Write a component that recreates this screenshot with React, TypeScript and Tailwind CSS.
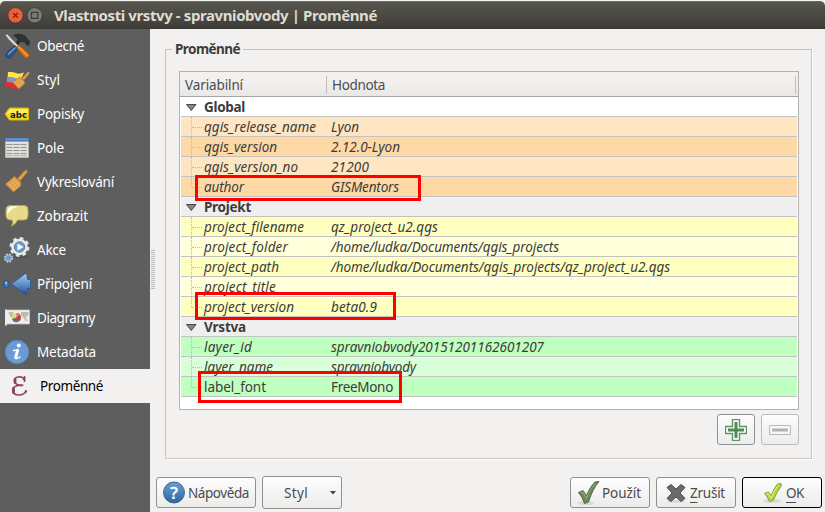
import { useLayoutEffect, useRef, useState } from "react";
import type { ReactNode } from "react";

/** Text whose tracking is tuned so that it occupies `w` pixels. */
function Fit({ w, children }: { w: number; children: ReactNode }) {
  const ref = useRef<HTMLSpanElement>(null);
  const [spacing, setSpacing] = useState(0);
  useLayoutEffect(() => {
    const el = ref.current;
    if (!el) return;
    const count = (el.textContent ?? "").length;
    setSpacing((w - el.getBoundingClientRect().width) / count);
  }, [w]);
  return (
    <span ref={ref} style={{ letterSpacing: `${spacing}px` }} className="inline-block whitespace-pre">
      {children}
    </span>
  );
}

const ToolsIcon = () => (
  <svg viewBox="0 0 26 26" className="size-[26px]">
    <path d="M9.500 2.500Q13 0 18 1.500q4 1.200 5 4.500l2.500 2-.3 3.500-2.200.8-2.500-3.500-3.500-.3-2.500 2.500-2-2 1.500-2.500Q12.500 3.500 9.500 2.500z" fill="#2b3335" stroke="#1a2021" strokeWidth=".5" />
    <path d="M13 9l2 2-3 3.500-2-2z" fill="#252b2d" />
    <path d="M1.500 2l2-.5L6 4.500l8.500 8.500-1.500 1.500L4.500 6z" fill="#e8e8e8" stroke="#8a8a8a" strokeWidth=".5" />
    <path d="M2 20.500l9-8 3 3-7.500 9.500Q4 25.500 2.500 24T2 20.500z" fill="#2a5690" stroke="#173765" strokeWidth=".7" />
    <path d="M4 21.500l7.500-7" stroke="#7ba6dc" strokeWidth="1.300" />
    <path d="M12.500 14.500l2.500-2.300L25 21.500l-.5 2-2.500 1.500z" fill="#f57900" stroke="#c95b00" strokeWidth=".7" />
    <path d="M15 14l8.500 8.500" stroke="#ffb053" strokeWidth="1" />
  </svg>
);

const Broom = () => (
  <>
    <path d="M13.500 9.500L20.500 2l2-1q1.500.5.500 2.500L16 12z" fill="#dda14c" stroke="#b1762b" strokeWidth=".7" />
    <path d="M10.500 7.500l6.500 6-.3 3.500-7.200 6L1.500 15z" fill="#dda04d" stroke="#b87f34" strokeWidth=".8" />
    <path d="M9 10.500l7 6.200M7 12.500l6.500 6.500M4.500 14.500l6.500 6.500" stroke="#edc07c" strokeWidth=".8" />
  </>
);

const StyleIcon = () => (
  <svg viewBox="0 0 26 26" className="size-[26px]">
    <path d="M4 5q5-.5 8 1t8-.5L17 12H3.500z" fill="#ffe54a" />
    <path d="M3.500 10q5-.5 8 1t6-1v6H2.500z" fill="#7799c8" />
    <path d="M2.500 15q5-.5 8 1.500t4.500 0v5Q9 22 7 20.500T1.500 19.500z" fill="#ee2929" />
    <g transform="translate(7.500 4) scale(.77)"><Broom /></g>
  </svg>
);

const LabelIcon = () => (
  <svg viewBox="0 0 26 26" className="size-[26px]">
    <path d="M1 13l4.500-6H24.500v12H5.500z" fill="#f1d91e" stroke="#d8b70d" />
    <path d="M6 8H24v4.500H2.800z" fill="#fff68a" opacity=".6" />
    <text x="6" y="16.700" fontFamily="DejaVu Sans, sans-serif" fontWeight="bold" fontSize="9" textLength="17" lengthAdjust="spacingAndGlyphs" fill="#20211c">abc</text>
  </svg>
);

const TableIcon = () => (
  <svg viewBox="0 0 26 26" className="size-[26px]">
    <path d="M1.500 4h23v18.500h-23z" fill="#dfe0dc" stroke="#c5c6c2" strokeWidth=".6" />
    <path d="M1 3h24v3.500H1z" fill="#4a78b4" />
    <path d="M2 4.200h22" stroke="#82a8d6" />
    <path d="M2.500 9.500h21M2.500 12.500h21M2.500 15.500h21M2.500 18.500h21" stroke="#93958f" strokeWidth="1" strokeDasharray="6 1" />
    <path d="M2.500 20.500h21" stroke="#a5a7a2" strokeWidth=".8" strokeDasharray="6 1" />
  </svg>
);

const BroomIcon = () => (
  <svg viewBox="0 0 26 26" className="size-[26px]"><Broom /></svg>
);

const BubbleIcon = () => (
  <svg viewBox="0 0 26 26" className="size-[26px]">
    <path d="M6 2.500h14q4 0 4 4v6.500q0 4-4 4h-6.500q-1.500 4-6 6 2-3 1-6H6q-4-.5-4-4V6.500q0-4 4-4z" fill="#e7da89" stroke="#b5a851" />
    <path d="M3.500 12Q2.500 4 7 3.700q5-.7 7.500 0Q6 5 3.500 12z" fill="#fffdf0" />
  </svg>
);

const GearIcon = () => (
  <svg viewBox="0 0 26 26" className="size-[26px] overflow-visible">
    <ellipse cx="18" cy="19.500" rx="8" ry="2" fill="#454545" opacity=".5" />
    <circle cx="15.500" cy="10" r="8.500" fill="none" stroke="#e5e5e3" strokeWidth="3" strokeDasharray="3.500 3.176" />
    <circle cx="15.500" cy="10" r="6.700" fill="#6a9bd2" stroke="#e9e9e7" strokeWidth="3.200" />
    <circle cx="15.500" cy="10" r="5.200" fill="none" stroke="#416ea6" strokeWidth=".9" />
    <path d="M13.500 6.500l6 3.500-6 3.500z" fill="#fff" />
    <circle cx="4.500" cy="21" r="3.800" fill="none" stroke="#c8d2dc" strokeWidth="1.500" strokeDasharray="1.900 1.080" />
    <circle cx="4.500" cy="21" r="3" fill="#6d9ccf" stroke="#afc5dc" strokeWidth=".7" />
  </svg>
);

const JoinIcon = () => (
  <svg viewBox="0 0 26 26" className="size-[26px] overflow-visible">
    <defs>
      <linearGradient id="join" x2="0" y2="1"><stop offset=".1" stopColor="#9cc2ef" /><stop offset=".55" stopColor="#5a89c4" /><stop offset="1" stopColor="#1d4a87" /></linearGradient>
    </defs>
    <ellipse cx="2.500" cy="13" rx="2.800" ry="3.700" fill="#4879b8" stroke="#254d82" />
    <ellipse cx="2" cy="11.700" rx="1" ry="1.200" fill="#a8caf0" />
    <path d="M7.500 13L22.500 1.800 23.500 8.500h3v9h-3l-1 7z" fill="url(#join)" stroke="#2c5792" strokeWidth=".8" />
  </svg>
);

const DiagramIcon = () => (
  <svg viewBox="0 0 26 26" className="size-[26px]">
    <path d="M2 5h23.500v14H2z" fill="#ededeb" stroke="#c9c9c7" strokeWidth=".7" />
    <path d="M2 4.500v16" stroke="#f1f1ef" strokeWidth="1.800" />
    <path d="M4.500 7h5l-1 4 1 4-3.500-4zM17 7h7.500l-.5 4-2.500 1 2 4h-2L19 12l-2-1z" fill="#b9bbb7" />
    <path d="M12.500 12.500V8a4.500 4.500 0 11-4.300 6z" fill="#da3535" />
    <path d="M12.500 12.500L8.200 14A4.500 4.500 0 0112.500 8z" fill="#f0df42" />
    <path d="M12.500 12.500V8a4.500 4.500 0 013.500 1.700z" fill="#e28060" />
    <path d="M12.500 12.500l1 4.500a4.500 4.500 0 01-5.300-3z" fill="#4277bb" />
  </svg>
);

const InfoIcon = () => (
  <svg viewBox="0 0 26 26" className="size-[26px]">
    <circle cx="13" cy="13" r="11.800" fill="#6a9bd2" stroke="#5085c0" />
    <circle cx="14.800" cy="6.500" r="2" fill="#fff" />
    <path d="M9.500 11.500q2.500-.3 4.500-.8" fill="none" stroke="#fff" strokeWidth="1.600" strokeLinecap="round" />
    <path d="M13.500 11.500l-1.800 7" stroke="#fff" strokeWidth="3" strokeLinecap="round" />
    <path d="M11.700 19q1 1.500 4-1" fill="none" stroke="#fff" strokeWidth="1.600" strokeLinecap="round" />
  </svg>
);

const EpsilonIcon = () => (
  <svg viewBox="0 0 26 26" className="size-[26px]">
    <g fill="none" stroke="#8c4260" strokeLinecap="round">
      <path d="M18.500 7Q17 3.800 13.500 3.800Q8.500 4 8.500 8Q8.700 11.500 14 12.200Q6.800 12.500 6.800 17.500Q7 22 13 22Q18.500 21.800 20 18" strokeWidth="1.600" />
      <path d="M9 6.500v3M7.500 15.500v4" strokeWidth="2.800" />
      <path d="M18.500 4v4M14 12.200h2.500M19.800 18v1" strokeWidth="1.900" />
    </g>
  </svg>
);

const menu = [
  { label: "Obecné", w: 47, icon: <ToolsIcon /> },
  { label: "Styl", w: 23, icon: <StyleIcon /> },
  { label: "Popisky", w: 47, icon: <LabelIcon /> },
  { label: "Pole", w: 27, icon: <TableIcon /> },
  { label: "Vykreslování", w: 77, icon: <BroomIcon /> },
  { label: "Zobrazit", w: 51, icon: <BubbleIcon /> },
  { label: "Akce", w: 29, icon: <GearIcon /> },
  { label: "Připojení", w: 55, icon: <JoinIcon /> },
  { label: "Diagramy", w: 58, icon: <DiagramIcon /> },
  { label: "Metadata", w: 59, icon: <InfoIcon /> },
];

type Variable = { name: string; nw: number; value?: string; vw?: number; bg: string; plain?: boolean };
type Group = { title: string; w: number; bg: string; rows: Variable[] };

const groups: Group[] = [
  {
    title: "Global", w: 41, bg: "bg-white",
    rows: [
      { name: "qgis_release_name", nw: 112, value: "Lyon", vw: 28, bg: "bg-[#ffe6c2]" },
      { name: "qgis_version", nw: 73, value: "2.12.0-Lyon", vw: 69, bg: "bg-[#fed9a6]" },
      { name: "qgis_version_no", nw: 94, value: "21200", vw: 38, bg: "bg-[#ffe6c2]" },
      { name: "author", nw: 40, value: "GISMentors", vw: 68, bg: "bg-[#fed9a6]" },
    ],
  },
  {
    title: "Projekt", w: 47, bg: "bg-[#efefef]",
    rows: [
      { name: "project_filename", nw: 100, value: "qz_project_u2.qgs", vw: 107, bg: "bg-[#ffffbf]" },
      { name: "project_folder", nw: 84, value: "/home/ludka/Documents/qgis_projects", vw: 228, bg: "bg-[#ffffd9]" },
      { name: "project_path", nw: 75, value: "/home/ludka/Documents/qgis_projects/qz_project_u2.qgs", vw: 339, bg: "bg-[#ffffbf]" },
      { name: "project_title", nw: 72, bg: "bg-[#ffffd9]" },
      { name: "project_version", nw: 90, value: "beta0.9", vw: 46, bg: "bg-[#ffffbf]" },
    ],
  },
  {
    title: "Vrstva", w: 42, bg: "bg-[#efefef]",
    rows: [
      { name: "layer_id", nw: 48, value: "spravniobvody20151201162601207", vw: 213, bg: "bg-[#bfffbf]" },
      { name: "layer_name", nw: 69, value: "spravniobvody", vw: 85, bg: "bg-[#d9ffd9]" },
      { name: "label_font", nw: 62, value: "FreeMono", vw: 62, bg: "bg-[#bfffbf]", plain: true },
    ],
  },
];

function VariableRow({ row, last }: { row: Variable; last: boolean }) {
  return (
    <div className={`flex h-5 border-b border-[#c3c3c3] ${row.bg} ${row.plain ? "" : "italic"}`}>
      <div className="flex w-[23px] shrink-0 pl-[10px]">
        <div className={`border-l border-dotted border-[#b9b9b9] ${last ? "h-[11px]" : "h-5"}`} />
        <div className="mt-[10px] h-px w-[10px] border-t border-dotted border-[#b9b9b9]" />
      </div>
      <div className="w-[127px] shrink-0"><Fit w={row.nw}>{row.name}</Fit></div>
      {row.value && <Fit w={row.vw ?? 0}>{row.value}</Fit>}
    </div>
  );
}

const button = "flex items-center rounded-[3px] border bg-gradient-to-b from-[#fdfdfd] to-[#ececeb]";

export default function App() {
  return (
    <div className="relative flex h-[512px] w-[825px] flex-col overflow-hidden bg-[#f2f1f0] text-[13.5px] leading-[20px] text-[#3c3c3c] [font-family:'Noto_Sans','Open_Sans',sans-serif]">
      <div className="h-[29px] shrink-0 bg-[#f5f5f5] pt-px">
        <header className="flex h-7 items-center rounded-t-[5px] border-t border-b border-t-[#696a60] border-b-[#393832] bg-gradient-to-b from-[#58574e] to-[#3e3d38] pl-[7px] text-[15px] font-bold text-[#dfdbd2]">
          <svg viewBox="0 0 37 18" className="mr-[10px] h-[18px] w-[37px]">
            <circle cx="8.500" cy="9.300" r="7.700" fill="#ef6036" stroke="#3b3430" strokeWidth=".8" />
            <path d="M6.200 7l4.600 4.600M10.800 7l-4.600 4.600" stroke="#5e2816" strokeWidth="1.300" />
            <circle cx="27.700" cy="9.300" r="7.700" fill="#7b7a73" stroke="#33322d" strokeWidth=".8" />
            <path d="M24.500 6.300h6.300v6h-6.300z" fill="none" stroke="#3c3b37" strokeWidth="1.200" />
          </svg>
          <Fit w={323}>Vlastnosti vrstvy - spravniobvody | Proměnné</Fit>
        </header>
      </div>

      <div className="flex min-h-0 flex-1">
        <nav className="w-[150px] shrink-0 bg-[#5e5e5e] text-white">
          {menu.map((m) => (
            <div key={m.label} className="flex h-[34px] items-center gap-[7px] pl-1">
              {m.icon}
              <Fit w={m.w}>{m.label}</Fit>
            </div>
          ))}
          <div className="flex h-[34px] items-center gap-[8px] bg-[#f2f1f0] pl-[6px] text-black">
            <EpsilonIcon />
            <Fit w={63}>Proměnné</Fit>
          </div>
        </nav>

        <div className="flex w-[15px] shrink-0 flex-col gap-px pl-px pt-[221px]">
          {Array.from({ length: 20 }, (_, i) => (
            <div key={i} className="h-px w-1 bg-[#bdbcbb]" />
          ))}
        </div>

        <main className="-ml-[9px] flex flex-1 flex-col pt-[10px]">
          <fieldset className="ml-[9px] h-[420px] w-[647px] border border-[#c5c4c3] pl-[13px] shadow-[1px_1px_0_#fff]">
            <legend className="-ml-[7px] h-[21px] bg-[#f2f1f0] px-[3px] font-bold">
              <Fit w={65}>Proměnné</Fit>
            </legend>
            <div className="mt-[11px] h-[339px] w-[620px] border border-[#b3b2b1] bg-white">
              <div className="flex h-[25px] border-b border-[#a5a4a3] bg-gradient-to-b from-[#f2f1f0] via-[#f0efee] to-[#e9e8e7] pl-[5px] pt-[3px] text-[#4c4c4c]">
                <div className="w-[141px]"><Fit w={58}>Variabilní</Fit></div>
                <div className="mr-[5px] mt-px h-[18px] w-px bg-[#bfbebd]" />
                <Fit w={53}>Hodnota</Fit>
                <div className="ml-auto mr-[2px] mt-px h-[18px] w-px bg-[#bfbebd]" />
              </div>
              <div className="ml-px mr-px">
                {groups.map((g) => (
                  <section key={g.title}>
                    <div className={`flex h-5 border-b border-[#c3c3c3] font-bold ${g.bg}`}>
                      <svg viewBox="0 0 23 19" className="h-[19px] w-[23px] shrink-0">
                        <path d="M5.500 7.500h9.500l-4.700 6z" fill="#858585" stroke="#494949" />
                      </svg>
                      <Fit w={g.w}>{g.title}</Fit>
                    </div>
                    {g.rows.map((r, i) => (
                      <VariableRow key={r.name} row={r} last={i === g.rows.length - 1} />
                    ))}
                  </section>
                ))}
              </div>
            </div>
            <div className="mr-[12px] mt-1 flex justify-end gap-[6px]">
              <button className={`${button} h-[31px] w-[38px] justify-center border-[#90908f]`}>
                <svg viewBox="0 0 22 22" className="size-[22px]">
                  <path d="M7.500 .5h7v7h7v7h-7v7h-7v-7h-7v-7h7z" fill="#fff" stroke="#5d9564" strokeWidth="1.400" />
                  <path d="M11 3v16M3 11h16" stroke="#4f8a55" strokeWidth="3" />
                </svg>
              </button>
              <button className={`${button} h-[31px] w-[38px] justify-center border-[#bdbcbb]`}>
                <svg viewBox="0 0 22 22" className="size-[22px]">
                  <path d="M.5 6.500h21v9H.5z" fill="#f7f7f7" stroke="#b7b7b7" />
                  <path d="M3 11h16" stroke="#b0b0b0" strokeWidth="3" />
                </svg>
              </button>
            </div>
          </fieldset>

          <footer className="mt-[17px] flex items-start gap-[6px] text-[#4c4c4c]">
            <button className={`${button} mt-px h-[31px] w-[100px] border-[#90908f] pl-[5px]`}>
              <svg viewBox="0 0 24 24" className="mr-[2px] size-6">
                <defs><linearGradient id="help" x2="0" y2="1"><stop stopColor="#6b9fd2" /><stop offset="1" stopColor="#2f659e" /></linearGradient></defs>
                <circle cx="12" cy="11.500" r="10.500" fill="url(#help)" stroke="#2f659e" />
                <text x="12" y="17.500" textAnchor="middle" fontFamily="Noto Sans, sans-serif" fontSize="17" fontWeight="500" fill="#fff" stroke="#fff" strokeWidth=".4">?</text>
              </svg>
              <Fit w={61}>Nápověda</Fit>
            </button>
            <button className={`${button} h-[33px] w-20 border-[#90908f] pl-[21px]`}>
              <Fit w={24}>Styl</Fit>
              <svg viewBox="0 0 6 4" className="ml-[22px] h-1 w-[6px]"><path d="M0 0h6L3 3.500z" fill="#444" /></svg>
            </button>
            <button className={`${button} ml-[222px] mt-px h-[31px] w-20 border-[#90908f] pl-[6px]`}>
              <svg viewBox="0 0 24 26" className="mr-[1px] h-[26px] w-6">
                <ellipse cx="9" cy="23" rx="8" ry="2" fill="#d8d8d6" />
                <path d="M1.500 12.500l4.500-2 3.500 5Q13 6.500 18 2l4-.5Q15.500 9 11.500 22l-4 1.500Q5.500 17 1.500 12.500z" fill="#6b8a5e" stroke="#48603f" strokeWidth=".9" />
                <path d="M3.500 13l2.500-1 3.500 6Q13 8.500 18.500 3" fill="none" stroke="#9eb48f" strokeWidth=".8" />
              </svg>
              <Fit w={39}>Použít</Fit>
            </button>
            <button className={`${button} mt-px h-[31px] w-20 border-[#90908f] pl-[9px]`}>
              <svg viewBox="0 0 20 20" className="mr-[4px] size-5">
                <ellipse cx="10" cy="18.500" rx="9" ry="1.500" fill="#d8d8d6" />
                <path d="M1 4.500l4-3 5 4.500 5-4.500 4 3-5 5.500 5 5.500-4 3-5-4.500-5 4.500-4-3L6 10z" fill="#6a6b6a" stroke="#4e4f4e" />
              </svg>
              <Fit w={35}><span className="underline underline-offset-[4px]">Z</span>rušit</Fit>
            </button>
            <button className={`${button} mt-px h-[31px] w-20 border-black pl-5`}>
              <svg viewBox="0 0 20 22" className="mr-[3px] h-[22px] w-5">
                <ellipse cx="9" cy="19" rx="9" ry="2" fill="#dadad8" />
                <path d="M1.500 11.500l4-1.500 2.700 3.500Q11 6 14.500 2l3.500-.5.500 2Q13.500 10 10.500 18l-4 1.500Q4.500 14.500 1.500 11.500z" fill="#b5d840" stroke="#7fa238" />
                <path d="M3.200 12l2-.5 3 4.500Q11 8 15.500 3" fill="none" stroke="#d9ee84" />
              </svg>
              <Fit w={18}><span className="underline underline-offset-[4px]">O</span>K</Fit>
            </button>
          </footer>
        </main>
      </div>

      <div className="absolute left-[195px] top-[175px] h-[26px] w-[226px] border-3 border-[#f00]" />
      <div className="absolute left-[195px] top-[292px] h-[28px] w-[201px] border-3 border-[#f00]" />
      <div className="absolute left-[198px] top-[371px] h-[32px] w-[204px] border-3 border-[#f00]" />
    </div>
  );
}
